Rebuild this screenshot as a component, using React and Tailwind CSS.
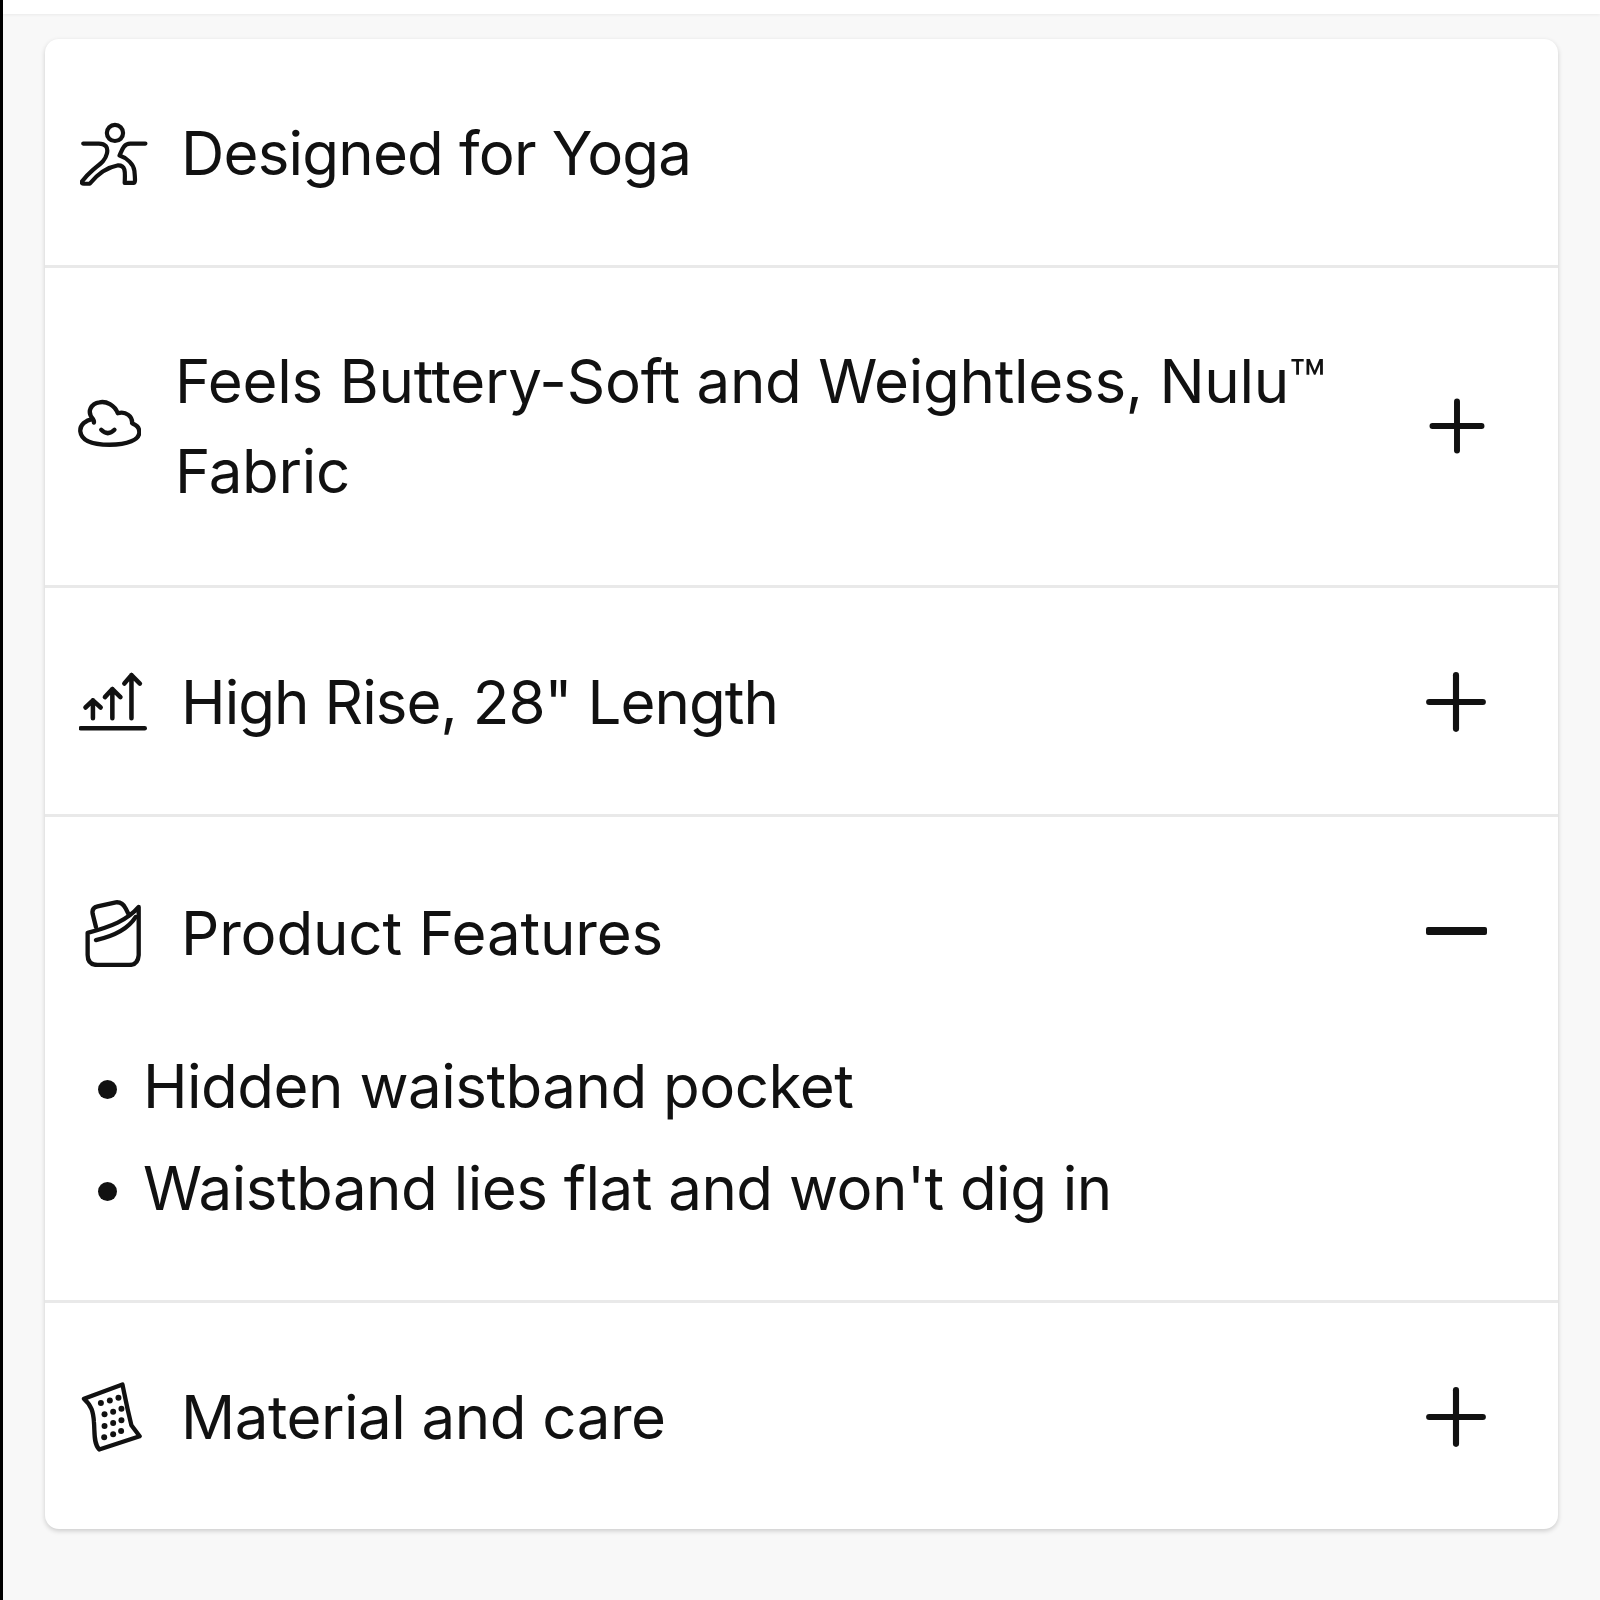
import { Plus } from 'lucide-react';

const YogaIcon = () => (
    <svg viewBox="60 65 210 210" className="w-[68px] h-[68px] shrink-0" fill="none" stroke="#111" strokeWidth="13" strokeLinejoin="round" strokeLinecap="round">
        <circle cx="168" cy="108" r="25" />
        <path d="M70 141 H118 C138 141 148 152 143 172 C138 195 120 205 100 222 C85 235 72 250 66 258 Q64 265 72 265 H90 C110 240 140 215 178 208 C200 208 200 225 198 262 H225 C232 262 230 250 228 225 C226 205 205 185 182 178 C190 160 195 141 215 141 H262" />
    </svg>
);

const CloudIcon = () => (
    <svg viewBox="55 80 190 190" className="w-[63px] h-[63px] shrink-0" fill="none" stroke="#111" strokeWidth="13" strokeLinejoin="round" strokeLinecap="round">
        <path d="M100 152 C78 156 60 170 62 190 C65 215 95 230 150 230 C205 230 240 215 240 192 C240 175 228 170 218 165 C220 145 200 128 175 135 C165 110 140 98 120 102 C95 105 80 130 100 152 Q104 158 103 163" />
        <path d="M125 185 Q145 205 165 185" />
    </svg>
);

const RiseIcon = () => (
    <svg viewBox="55 60 210 190" className="w-[68px] h-[62px] shrink-0" fill="none" stroke="#111" strokeWidth="14" strokeLinecap="round" strokeLinejoin="round">
        <path d="M60 236 H258" />
        <path d="M98 205 V150 M75 172 L98 150 L122 172" />
        <path d="M158 205 V115 M135 140 L158 115 L183 140" />
        <path d="M217 205 V72 M195 98 L217 72 L243 98" />
    </svg>
);

const PocketIcon = () => (
    <svg viewBox="60 60 190 200" className="w-[63px] h-[67px] shrink-0" fill="none" stroke="#111" strokeWidth="13" strokeLinecap="round" strokeLinejoin="round">
        <path d="M80 158 V225 Q80 255 110 255 H205 Q232 255 234 225 V80 C200 120 150 140 80 158 Z" />
        <path d="M105 140 L95 100 Q92 82 110 78 L165 66 Q185 64 195 85 L205 105" />
        <path d="M105 180 C150 170 200 150 225 110" />
    </svg>
);

const dots = [
    [123, 103], [150, 95], [176, 87],
    [134, 137], [160, 129], [185, 120],
    [134, 172], [160, 163], [185, 155],
    [133, 206], [160, 197], [184, 187],
];

const ScrollIcon = () => (
    <svg viewBox="60 40 190 210" className="w-[63px] h-[70px] shrink-0" fill="none" stroke="#111" strokeWidth="13" strokeLinecap="round" strokeLinejoin="round">
        <path d="M72 90 L188 47 C195 80 200 110 215 170 L240 203 L118 243 C100 225 105 190 102 160 C100 130 95 110 72 90 Z" />
        {dots.map(([cx, cy], i) => (
            <circle key={i} cx={cx} cy={cy} r="9" fill="#111" stroke="none" />
        ))}
    </svg>
);

const MinusIcon = () => (
    <div className="w-[61px] h-[8px] mr-[1px] mb-[4px] bg-[#111] rounded-[2px]" />
);

const PlusToggle = () => (
    <Plus size={92} strokeWidth={1.6} className="-my-[5px] mr-[-14px] shrink-0" />
);

const Row = ({ icon, title, toggle, gap, indent, className, children }) => (
    <div className={`border-b-[3px] border-[#e9e9e9] last:border-b-0 pr-[70px] ${className}`}>
        <div className="flex items-center">
            <div className="flex items-center flex-1 min-w-0" style={{ gap, paddingLeft: indent }}>
                {icon}
                <span>{title}</span>
            </div>
            {toggle}
        </div>
        {children}
    </div>
);

export default function App() {
    return (
        <div className="flex h-[1600px] bg-[#f8f8f8] text-[#111] text-[60px] leading-[90px] font-['Inter',sans-serif]">
            <div className="w-[3px] bg-black" />
            <div className="flex-1 flex flex-col">
                <div className="h-[14px] bg-white shadow-[0_1px_3px_rgba(0,0,0,0.06)]" />
                <div className="mt-[25px] ml-[42px] mr-[42px] bg-white rounded-[14px] shadow-[0_2px_5px_rgba(0,0,0,0.18)]">
                    <Row icon={<YogaIcon />} title="Designed for Yoga" gap="33px" indent="35px" className="h-[229px] pt-[69px] tracking-[-0.8px]" />
                    <Row
                        icon={<CloudIcon />}
                        title="Feels Buttery-Soft and Weightless, Nulu™ Fabric"
                        gap="34px"
                        indent="33px"
                        toggle={<Plus size={84} strokeWidth={1.7} className="ml-[60px] mr-[-11px] shrink-0" />}
                        className="h-[320px] pt-[68px] tracking-[-0.27px]"
                    />
                    <Row
                        icon={<RiseIcon />}
                        title={'High Rise, 28" Length'}
                        gap="34px"
                        indent="34px"
                        toggle={<PlusToggle />}
                        className="h-[229px] pt-[69px] tracking-[-0.95px]"
                    />
                    <Row
                        icon={<PocketIcon />}
                        title="Product Features"
                        gap="37px"
                        indent="36px"
                        toggle={<MinusIcon />}
                        className="h-[486px] pt-[71px] tracking-[-0.15px]"
                    >
                        <ul className="list-disc pl-[98px] mt-[57px] leading-[102px] tracking-[-0.5px]">
                            <li>Hidden waistband pocket</li>
                            <li>Waistband lies flat and won't dig in</li>
                        </ul>
                    </Row>
                    <Row
                        icon={<ScrollIcon />}
                        title="Material and care"
                        gap="38px"
                        indent="35px"
                        toggle={<PlusToggle />}
                        className="h-[226px] pt-[69px] tracking-[-0.5px]"
                    />
                </div>
            </div>
        </div>
    );
}
